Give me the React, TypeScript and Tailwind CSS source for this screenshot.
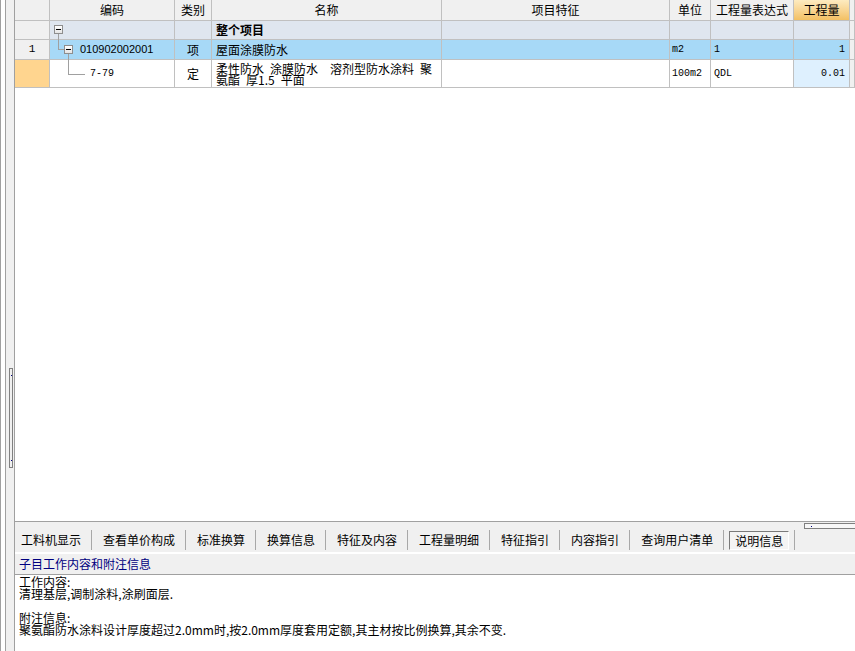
import React from "react";

const cjk = "font-['Noto_Sans_CJK_SC',sans-serif]";
const mono = "font-['Liberation_Mono','Noto_Sans_CJK_SC',monospace]";
const cols = "grid grid-cols-[35px_125px_37px_230px_228px_41px_83px_56px_1fr]";
const line = "border-r border-b border-[#c0c0c0]";

function MinusBox() {
  return (
    <div className="w-[9px] h-[9px] border border-[#8e8e8e] bg-gradient-to-b from-white to-[#e4e4e4] flex items-center justify-center">
      <div className="w-[5px] h-px bg-black" />
    </div>
  );
}

const tabs = ["工料机显示", "查看单价构成", "标准换算", "换算信息", "特征及内容", "工程量明细", "特征指引", "内容指引", "查询用户清单"];

export default function App() {
  return (
    <div className={`w-[855px] h-[651px] flex bg-white overflow-hidden text-black ${cjk}`}>
      {/* left splitter strip */}
      <div className="flex h-full shrink-0">
        <div className="w-px bg-[#a0a0a0]" />
        <div className="w-[4px] bg-white" />
        <div className="w-px bg-[#a0a0a0]" />
        <div className="w-[8px] bg-[#f0f0f0] flex flex-col">
          <div className="mt-[368px] ml-[3px] w-[4px] h-[100px] border border-[#808080] relative">
            <div className="absolute right-0 top-[6px] w-px h-px bg-[#000080]" />
            <div className="absolute right-0 bottom-[6px] w-px h-px bg-[#000080]" />
          </div>
        </div>
        <div className="w-px bg-[#a0a0a0]" />
      </div>

      <div className="flex-1 flex flex-col min-w-0">
        {/* grid */}
        <div className="h-[522px] shrink-0 border-b border-[#a0a0a0] bg-white text-[12px]">
          {/* header */}
          <div className={`${cols} h-[21px]`}>
            {["", "编码", "类别", "名称", "项目特征", "单位", "工程量表达式"].map((t, i) => (
              <div key={i} className={`${line} bg-[#f0f0f0] flex items-center justify-center leading-none whitespace-nowrap`}>
                {t}
              </div>
            ))}
            <div className={`${line} bg-gradient-to-b from-[#fdebc0] to-[#f3c062] flex items-center justify-center leading-none`}>
              工程量
            </div>
            <div className={`${line} bg-[#f0f0f0]`} />
          </div>

          {/* row: 整个项目 */}
          <div className={`${cols} h-[19px] leading-none`}>
            <div className={`${line} bg-[#f0f0f0]`} />
            <div className={`${line} bg-[#dfe6ef] relative`}>
              <div className="absolute left-[4px] top-[4px]">
                <MinusBox />
              </div>
              <div className="absolute left-[8px] top-[13px] w-px h-[6px] bg-[#a0a0a0]" />
            </div>
            <div className={`${line} bg-[#dfe6ef]`} />
            <div className={`${line} bg-[#dfe6ef] flex items-center pl-[4px] font-bold`}>整个项目</div>
            <div className={`${line} bg-[#dfe6ef]`} />
            <div className={`${line} bg-[#dfe6ef]`} />
            <div className={`${line} bg-[#dfe6ef]`} />
            <div className={`${line} bg-[#dfe6ef]`} />
            <div className={`${line} bg-[#f0f0f0]`} />
          </div>

          {/* row 1: 屋面涂膜防水 */}
          <div className={`${cols} h-[20px] leading-none`}>
            <div className={`${line} bg-[#f0f0f0] flex items-center justify-center ${mono} text-[11px]`}>1</div>
            <div className={`${line} bg-[#a7d9f7] relative flex items-center`}>
              <div className="absolute left-[8px] top-0 w-px h-[10px] bg-[#a0a0a0]" />
              <div className="absolute left-[8px] top-[9px] w-[6px] h-px bg-[#a0a0a0]" />
              <div className="absolute left-[14px] top-[5px]">
                <MinusBox />
              </div>
              <div className="absolute left-[18px] top-[14px] w-px h-[6px] bg-[#a0a0a0]" />
              <span className="pl-[30px] font-['Liberation_Sans',sans-serif] text-[11px]">010902002001</span>
            </div>
            <div className={`${line} bg-[#a7d9f7] flex items-center justify-center`}>项</div>
            <div className={`${line} bg-[#a7d9f7] flex items-center pl-[4px]`}>屋面涂膜防水</div>
            <div className={`${line} bg-[#a7d9f7]`} />
            <div className={`${line} bg-[#a7d9f7] flex items-center pl-[2px] ${mono} text-[10px]`}>m2</div>
            <div className={`${line} bg-[#a7d9f7] flex items-center pl-[3px] ${mono} text-[10px]`}>1</div>
            <div className={`${line} bg-[#a7d9f7] flex items-center justify-end pr-[4px] ${mono} text-[10px]`}>1</div>
            <div className={`${line} bg-[#f0f0f0]`} />
          </div>

          {/* row: 7-79 */}
          <div className={`${cols} h-[28px] leading-none`}>
            <div className={`${line} bg-[#ffd58f]`} />
            <div className={`${line} bg-white relative flex items-center`}>
              <div className="absolute left-[18px] top-0 w-px h-[15px] bg-[#a0a0a0]" />
              <div className="absolute left-[18px] top-[14px] w-[17px] h-px bg-[#a0a0a0]" />
              <span className={`pl-[40px] ${mono} text-[10px]`}>7-79</span>
            </div>
            <div className={`${line} bg-white flex items-center justify-center`}>定</div>
            <div className={`${line} bg-white flex items-center pl-[4px] leading-[11px] whitespace-pre`}>
              <span>
                {"柔性防水\u2002涂膜防水\u2002\u2002溶剂型防水涂料\u2002聚"}
                <br />
                {"氨酯\u2002厚1.5\u2002平面"}
              </span>
            </div>
            <div className={`${line} bg-white`} />
            <div className={`${line} bg-white flex items-center pl-[2px] ${mono} text-[10px]`}>100m2</div>
            <div className={`${line} bg-white flex items-center pl-[3px] ${mono} text-[10px]`}>QDL</div>
            <div className={`${line} bg-[#def0fe] flex items-center justify-end pr-[4px] ${mono} text-[10px]`}>0.01</div>
            <div className={`${line} bg-[#f0f0f0]`} />
          </div>
        </div>

        {/* tab bar */}
        <div className="h-[30px] shrink-0 bg-[#f0f0f0] relative flex items-start pt-[8px] text-[12px]">
          {tabs.map((t, i) => (
            <React.Fragment key={t}>
              <div className={`${i === 0 ? "pl-[6px]" : "pl-[11px]"} pr-[10px] h-[20px] leading-[20px] whitespace-nowrap`}>{t}</div>
              <div className="w-px h-[20px] bg-[#a8a8a8]" />
            </React.Fragment>
          ))}
          <div className="mx-[5px] mt-px h-[19px] px-[5px] leading-[17px] border border-[#7a7a7a] border-r-white border-b-white bg-[#f4f4f4] whitespace-nowrap">
            说明信息
          </div>
          <div className="w-px h-[20px] bg-[#a8a8a8]" />
          <div className="absolute right-0 top-px w-[51px] h-[6px] border border-[#808080] border-r-0 bg-[#f7f7f7]">
            <div className="absolute left-[6px] top-[2px] w-px h-px bg-[#000080]" />
          </div>
        </div>

        {/* info header */}
        <div className="h-[2px] shrink-0 bg-white" />
        <div className="h-[21px] shrink-0 bg-[#f0f0f0] border-b border-[#a0a0a0] flex items-center pl-[4px] text-[12px] text-[#000080] leading-none">
          子目工作内容和附注信息
        </div>

        {/* info content */}
        <div className="flex-1 bg-white pl-[4px] pt-[1px] text-[12px] leading-[12px] whitespace-pre">
          <div>工作内容:</div>
          <div>清理基层,调制涂料,涂刷面层.</div>
          <div>&nbsp;</div>
          <div>附注信息:</div>
          <div>聚氨酯防水涂料设计厚度超过2.0mm时,按2.0mm厚度套用定额,其主材按比例换算,其余不变.</div>
        </div>
      </div>
    </div>
  );
}
